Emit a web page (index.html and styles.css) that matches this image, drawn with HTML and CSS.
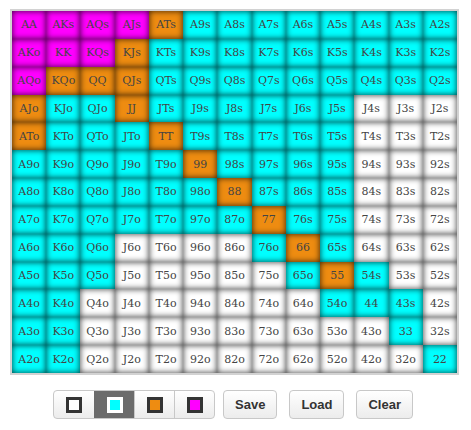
FILE: index.html
```html
<!DOCTYPE html>
<html>
<head>
<meta charset="utf-8">
<link rel="stylesheet" href="styles.css">
</head>
<body>
<div class="page">
  <div class="grid">
    <div class="cell m">AA</div><div class="cell m">AKs</div><div class="cell m">AQs</div><div class="cell m">AJs</div><div class="cell o">ATs</div><div class="cell c">A9s</div><div class="cell c">A8s</div><div class="cell c">A7s</div><div class="cell c">A6s</div><div class="cell c">A5s</div><div class="cell c">A4s</div><div class="cell c">A3s</div><div class="cell c">A2s</div>
    <div class="cell m">AKo</div><div class="cell m">KK</div><div class="cell m">KQs</div><div class="cell o">KJs</div><div class="cell c">KTs</div><div class="cell c">K9s</div><div class="cell c">K8s</div><div class="cell c">K7s</div><div class="cell c">K6s</div><div class="cell c">K5s</div><div class="cell c">K4s</div><div class="cell c">K3s</div><div class="cell c">K2s</div>
    <div class="cell m">AQo</div><div class="cell o">KQo</div><div class="cell o">QQ</div><div class="cell o">QJs</div><div class="cell c">QTs</div><div class="cell c">Q9s</div><div class="cell c">Q8s</div><div class="cell c">Q7s</div><div class="cell c">Q6s</div><div class="cell c">Q5s</div><div class="cell c">Q4s</div><div class="cell c">Q3s</div><div class="cell c">Q2s</div>
    <div class="cell o">AJo</div><div class="cell c">KJo</div><div class="cell c">QJo</div><div class="cell o">JJ</div><div class="cell c">JTs</div><div class="cell c">J9s</div><div class="cell c">J8s</div><div class="cell c">J7s</div><div class="cell c">J6s</div><div class="cell c">J5s</div><div class="cell w">J4s</div><div class="cell w">J3s</div><div class="cell w">J2s</div>
    <div class="cell o">ATo</div><div class="cell c">KTo</div><div class="cell c">QTo</div><div class="cell c">JTo</div><div class="cell o">TT</div><div class="cell c">T9s</div><div class="cell c">T8s</div><div class="cell c">T7s</div><div class="cell c">T6s</div><div class="cell c">T5s</div><div class="cell w">T4s</div><div class="cell w">T3s</div><div class="cell w">T2s</div>
    <div class="cell c">A9o</div><div class="cell c">K9o</div><div class="cell c">Q9o</div><div class="cell c">J9o</div><div class="cell c">T9o</div><div class="cell o">99</div><div class="cell c">98s</div><div class="cell c">97s</div><div class="cell c">96s</div><div class="cell c">95s</div><div class="cell w">94s</div><div class="cell w">93s</div><div class="cell w">92s</div>
    <div class="cell c">A8o</div><div class="cell c">K8o</div><div class="cell c">Q8o</div><div class="cell c">J8o</div><div class="cell c">T8o</div><div class="cell c">98o</div><div class="cell o">88</div><div class="cell c">87s</div><div class="cell c">86s</div><div class="cell c">85s</div><div class="cell w">84s</div><div class="cell w">83s</div><div class="cell w">82s</div>
    <div class="cell c">A7o</div><div class="cell c">K7o</div><div class="cell c">Q7o</div><div class="cell c">J7o</div><div class="cell c">T7o</div><div class="cell c">97o</div><div class="cell c">87o</div><div class="cell o">77</div><div class="cell c">76s</div><div class="cell c">75s</div><div class="cell w">74s</div><div class="cell w">73s</div><div class="cell w">72s</div>
    <div class="cell c">A6o</div><div class="cell c">K6o</div><div class="cell c">Q6o</div><div class="cell w">J6o</div><div class="cell w">T6o</div><div class="cell w">96o</div><div class="cell w">86o</div><div class="cell c">76o</div><div class="cell o">66</div><div class="cell c">65s</div><div class="cell w">64s</div><div class="cell w">63s</div><div class="cell w">62s</div>
    <div class="cell c">A5o</div><div class="cell c">K5o</div><div class="cell c">Q5o</div><div class="cell w">J5o</div><div class="cell w">T5o</div><div class="cell w">95o</div><div class="cell w">85o</div><div class="cell w">75o</div><div class="cell c">65o</div><div class="cell o">55</div><div class="cell c">54s</div><div class="cell w">53s</div><div class="cell w">52s</div>
    <div class="cell c">A4o</div><div class="cell c">K4o</div><div class="cell w">Q4o</div><div class="cell w">J4o</div><div class="cell w">T4o</div><div class="cell w">94o</div><div class="cell w">84o</div><div class="cell w">74o</div><div class="cell w">64o</div><div class="cell c">54o</div><div class="cell c">44</div><div class="cell c">43s</div><div class="cell w">42s</div>
    <div class="cell c">A3o</div><div class="cell c">K3o</div><div class="cell w">Q3o</div><div class="cell w">J3o</div><div class="cell w">T3o</div><div class="cell w">93o</div><div class="cell w">83o</div><div class="cell w">73o</div><div class="cell w">63o</div><div class="cell w">53o</div><div class="cell w">43o</div><div class="cell c">33</div><div class="cell w">32s</div>
    <div class="cell c">A2o</div><div class="cell c">K2o</div><div class="cell w">Q2o</div><div class="cell w">J2o</div><div class="cell w">T2o</div><div class="cell w">92o</div><div class="cell w">82o</div><div class="cell w">72o</div><div class="cell w">62o</div><div class="cell w">52o</div><div class="cell w">42o</div><div class="cell w">32o</div><div class="cell c">22</div>
  </div>
  <div class="controls">
    <div class="seg">
      <div class="seg-item"><span class="swatch sw-w"></span></div>
      <div class="seg-item active"><span class="swatch sw-c"></span></div>
      <div class="seg-item"><span class="swatch sw-o"></span></div>
      <div class="seg-item"><span class="swatch sw-m"></span></div>
    </div>
    <button class="btn">Save</button>
    <button class="btn">Load</button>
    <button class="btn">Clear</button>
  </div>
</div>
</body>
</html>
```

FILE: styles.css
```css
html, body {
  margin: 0;
  padding: 0;
  background: #fff;
}
.page {
  padding: 9px 0 0 10px;
}
.grid {
  width: 445px;
  height: 362px;
  border: 2px solid #d2d2d2;
  display: grid;
  grid-template-columns: repeat(13, 1fr);
  grid-template-rows: repeat(13, 1fr);
}
.cell {
  display: flex;
  align-items: center;
  justify-content: center;
  font-family: "DejaVu Serif", serif;
  font-size: 11px;
  color: #444;
  box-shadow: inset 0 0 6px rgba(0, 0, 0, 0.8);
}
.m { background: #ff00ff; }
.o { background: #ee8c11; }
.c { background: #00ffff; }
.w { background: #ffffff; }

.controls {
  display: flex;
  align-items: center;
  gap: 12px;
  padding: 15px 0 0 43px;
}
.seg {
  display: flex;
  height: 27px;
  border: 1px solid #c8c8c8;
  border-radius: 4px;
  overflow: hidden;
  margin-right: -4px;
  background: linear-gradient(#ffffff, #ececec);
}
.seg-item {
  width: 40px;
  display: flex;
  align-items: center;
  justify-content: center;
  border-left: 1px solid #c8c8c8;
  box-sizing: border-box;
}
.seg-item:first-child { border-left: none; }
.seg-item.active {
  background: #6b6b6b;
  border-left-color: #6b6b6b;
}
.swatch {
  width: 10px;
  height: 10px;
  border: 3px solid #333;
  display: block;
}
.active .swatch { border-color: #fff; }
.sw-w { background: #fff; }
.sw-c { background: #00ffff; }
.sw-o { background: #ee8c11; }
.sw-m { background: #ff00ff; }

.btn {
  height: 29px;
  padding: 0 11px;
  border: 1px solid #c8c8c8;
  border-radius: 4px;
  background: linear-gradient(#ffffff, #ececec);
  font-family: "Liberation Sans", Arial, sans-serif;
  font-weight: bold;
  font-size: 13px;
  color: #333;
}
```
